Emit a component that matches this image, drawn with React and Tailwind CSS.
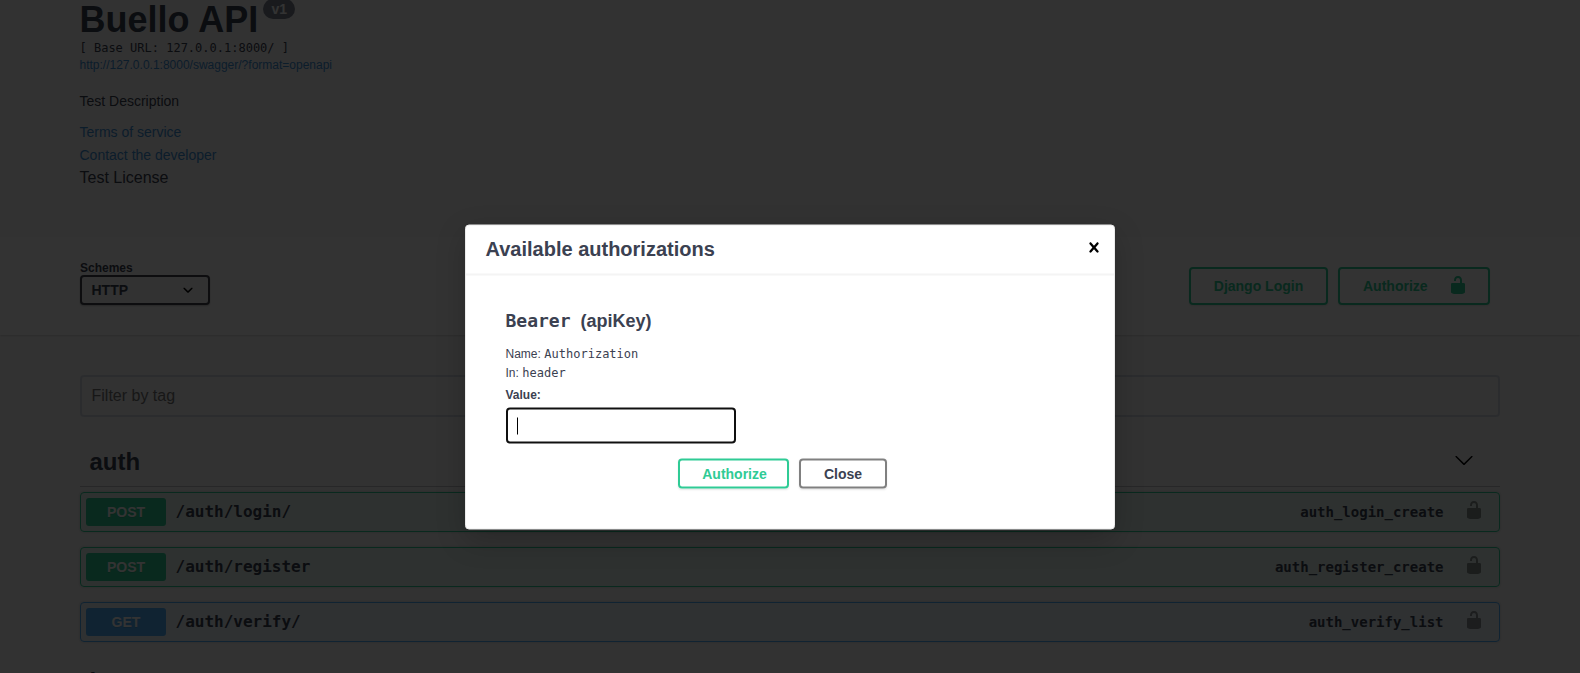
const MONO = 'font-["DejaVu_Sans_Mono",monospace]';

function Unlock({ className }) {
  return (
    <svg viewBox="0 0 20 20" width="20" height="20" className={className} fill="currentColor">
      <path d="M15.8 8H14V5.6C14 2.703 12.665 1 10 1 7.334 1 6 2.703 6 5.6V6h2v-.801C8 3.754 8.797 3 10 3c1.203 0 2 .754 2 2.199V8H4c-.553 0-1 .646-1 1.199V17c0 .549.428 1.139.951 1.307l1.197.387C5.672 18.861 6.55 19 7.1 19h5.8c.549 0 1.428-.139 1.951-.307l1.196-.387c.524-.167.953-.757.953-1.306V9.199C17 8.646 16.352 8 15.8 8z" />
    </svg>
  );
}

function LargeArrow() {
  return (
    <svg viewBox="0 0 20 20" width="20" height="20" fill="#000" className="mb-[3px]">
      <path d="M17.418 6.109c.272-.268.709-.268.979 0s.271.701 0 .969l-7.908 7.83c-.27.268-.707.268-.979 0l-7.908-7.83c-.27-.268-.27-.701 0-.969.271-.268.709-.268.979 0L10 13.25l7.418-7.141z" />
    </svg>
  );
}

const tones = {
  post: { row: 'border-[#2fcb95] bg-[#2fcb95]/10', badge: 'bg-[#2fcb95]' },
  get: { row: 'border-[#50aff7] bg-[#50aff7]/10', badge: 'bg-[#50aff7]' },
};

const operations = [
  { tone: 'post', method: 'POST', path: '/auth/login/', id: 'auth_login_create' },
  { tone: 'post', method: 'POST', path: '/auth/register', id: 'auth_register_create' },
  { tone: 'get', method: 'GET', path: '/auth/verify/', id: 'auth_verify_list' },
];

function Operation({ tone, method, path, id }) {
  const t = tones[tone];
  return (
    <div className={`mb-[15px] flex h-10 items-center rounded border px-[5px] shadow-[0_0_3px_rgba(0,0,0,0.19)] ${t.row}`}>
      <span className={`flex h-7 w-20 items-center justify-center rounded-[3px] text-sm font-bold text-white [text-shadow:0_1px_0_rgba(0,0,0,0.1)] ${t.badge}`}>
        {method}
      </span>
      <span className={`ml-[9.5px] flex-1 text-base font-semibold ${MONO}`}>{path}</span>
      <span className={`text-sm font-semibold ${MONO}`}>{id}</span>
      <Unlock className="mr-[10px] ml-[20.5px] mb-[4px] opacity-40 text-black" />
    </div>
  );
}

function Page() {
  return (
    <div className="h-[673px] overflow-hidden bg-[#fafafa]">
      <header className="flex h-[237px] flex-col items-start pl-[79.5px]">
        <h2 className="flex h-10 items-start text-4xl leading-[40px] font-bold">
          Buello API
          <span className="-mt-px ml-[5px] flex h-5 w-8 items-center justify-center rounded-full bg-[#7d8492] text-sm leading-none text-white">
            v1
          </span>
        </h2>
        <pre className={`h-4 text-xs leading-4 ${MONO}`}>[ Base URL: 127.0.0.1:8000/ ]</pre>
        <a className="h-[18px] text-xs leading-[18px] text-[#3f91d8]">http://127.0.0.1:8000/swagger/?format=openapi</a>
        <p className="mt-[17px] text-sm leading-5">Test Description</p>
        <a className="mt-[11px] text-sm leading-5 text-[#3f91d8]">Terms of service</a>
        <a className="mt-[3px] text-sm leading-5 text-[#3f91d8]">Contact the developer</a>
        <p className="mt-px text-base leading-6">Test License</p>
      </header>

      <section className="flex h-[98px] items-start justify-between bg-white px-20 pt-[30px] shadow-[0_1px_2px_rgba(0,0,0,0.15)]">
        <label className="flex flex-col text-xs leading-[8px] font-bold">
          <span className="-mt-[3px] h-[11px]">Schemes</span>
          <span className="flex h-[30px] w-[130px] items-center justify-between rounded border-2 border-[#41444e] bg-[#f7f7f7] pr-[10px] pl-[9.5px] text-sm shadow-[0_1px_2px_rgba(0,0,0,0.25)]">
            HTTP
            <svg viewBox="0 0 20 20" width="20" height="20" fill="#000">
              <path d="M13.418 7.859c.271-.268.709-.268.978 0 .27.268.272.701 0 .969l-3.908 3.83c-.27.268-.707.268-.979 0l-3.908-3.83c-.27-.267-.27-.701 0-.969.271-.268.709-.268.978 0L10 11l3.418-3.141z" />
            </svg>
          </span>
        </label>
        <div className="mr-[10px] flex gap-[10px] text-sm font-bold text-[#2fcb95]">
          <button className="flex h-[38px] w-[139px] items-center justify-center rounded border-2 border-[#2fcb95] shadow-[0_1px_2px_rgba(0,0,0,0.1)]">
            Django Login
          </button>
          <button className="flex h-[38px] w-[152px] items-center rounded border-2 border-[#2fcb95] pl-[23px] shadow-[0_1px_2px_rgba(0,0,0,0.1)]">
            Authorize
            <Unlock className="ml-[20px] mb-[2px]" />
          </button>
        </div>
      </section>

      <main className="px-20 pt-10">
        <div className="flex h-[42px] items-center rounded border-2 border-[#d8dde7] bg-[#fafafa] pl-[9.5px] text-base text-[#757575]">
          Filter by tag
        </div>
        <h3 className="mt-5 mb-[5px] flex h-[50px] items-center justify-between border-b border-[#3b4151]/30 pr-[26px] pl-[9.5px] text-2xl font-bold">
          auth
          <LargeArrow />
        </h3>
        {operations.map((o) => (
          <Operation key={o.id} {...o} />
        ))}
        <h3 className="flex h-[50px] items-center pl-[9.5px] text-2xl font-bold">b</h3>
      </main>
    </div>
  );
}

function Dialog() {
  return (
    <div className="absolute top-[224px] left-[465px] h-[305px] w-[650px] translate-y-[0.5px] rounded border border-[#ebebeb] bg-white shadow-[0_10px_30px_rgba(0,0,0,0.2)]">
      <div className="flex h-[50px] items-center justify-between border-b-2 border-[#f4f4f4] pr-[10px] pb-[2px] pl-[19.5px]">
        <h3 className="text-xl font-semibold">Available authorizations</h3>
        <svg viewBox="0 0 20 20" width="20" height="20" fill="#000" className="mb-[3px]">
          <path d="M14.348 14.849c-.469.469-1.229.469-1.697 0L10 11.819l-2.651 3.029c-.469.469-1.229.469-1.697 0-.469-.469-.469-1.229 0-1.697l2.758-3.15-2.759-3.152c-.469-.469-.469-1.228 0-1.697.469-.469 1.228-.469 1.697 0L10 8.183l2.651-3.031c.469-.469 1.228-.469 1.697 0 .469.469.469 1.229 0 1.697l-2.758 3.152 2.758 3.15c.469.469.469 1.229 0 1.698z" />
        </svg>
      </div>
      <div className="pr-10 pl-[39.5px] pt-[33px]">
        <h4 className="flex h-6 items-baseline text-lg leading-6 font-semibold">
          <span className={MONO}>Bearer</span>
          <span className="ml-[10px]">(apiKey)</span>
        </h4>
        <p className="mt-3 flex h-[19px] items-baseline gap-[3.5px] text-xs leading-[19px]">
          Name: <code className={MONO}>Authorization</code>
        </p>
        <p className="flex h-[19px] items-baseline gap-[3.5px] text-xs leading-[19px]">
          In: <code className={MONO}>header</code>
        </p>
        <p className="mt-[3px] h-[19px] text-xs leading-[19px] font-bold">Value:</p>
        <div className="mt-[3px] ml-[0.5px] flex h-9 w-[230px] items-center rounded border-2 border-[#101010] bg-white pl-[9px]">
          <span className="h-[17px] w-px bg-black" />
        </div>
        <div className="mt-[15px] flex gap-[10px] pl-[172.5px] text-sm font-bold">
          <button className="h-[30px] w-[111px] rounded border-2 border-[#2fcb95] pl-[2px] text-[#2fcb95] shadow-[0_1px_2px_rgba(0,0,0,0.1)]">
            Authorize
          </button>
          <button className="h-[30px] w-[88px] rounded border-2 border-[#808080] shadow-[0_1px_2px_rgba(0,0,0,0.1)]">
            Close
          </button>
        </div>
      </div>
    </div>
  );
}

export default function App() {
  return (
    <div className='relative h-[673px] w-[1580px] overflow-hidden font-["Liberation_Sans",Arial,sans-serif] text-[#3b4151]'>
      <Page />
      <div className="absolute inset-0 bg-black/80" />
      <Dialog />
    </div>
  );
}
